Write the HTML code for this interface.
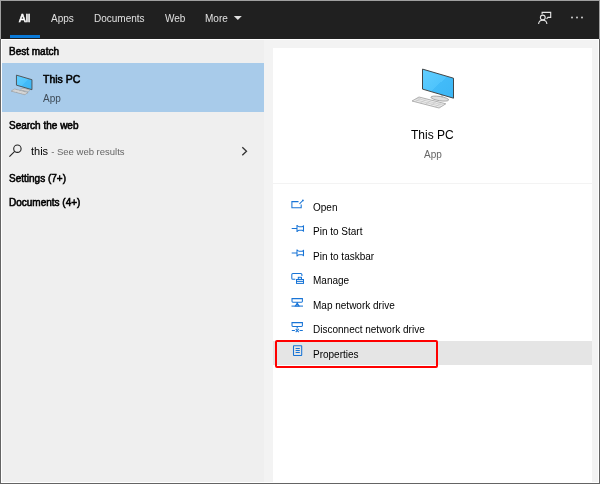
<!DOCTYPE html>
<html><head><meta charset="utf-8">
<style>
html,body{margin:0;padding:0;}
body{width:600px;height:484px;overflow:hidden;position:relative;background:#646464;font-family:"Liberation Sans",sans-serif;}
.a{position:absolute;}
.t{position:absolute;white-space:nowrap;line-height:1;will-change:transform;}
.b{font-weight:normal;-webkit-text-stroke:0.55px currentColor;}
</style></head><body>
<!-- borders -->
<div class="a" style="left:0;top:0;width:600px;height:39px;background:#a0a0a0"></div>
<div class="a" style="left:1px;top:1px;width:598px;height:38px;background:#202020"></div>
<div class="a" style="left:1px;top:39px;width:598px;height:444px;background:#ffffff"></div>
<div class="a" style="left:2px;top:40px;width:262px;height:442px;background:#efefef"></div>
<div class="a" style="left:264px;top:40px;width:334px;height:442px;background:#f3f3f3"></div>
<div class="a" style="left:273px;top:48px;width:319px;height:434px;background:#ffffff"></div>

<div class="a" style="left:273px;top:183px;width:319px;height:1px;background:#f3f3f3"></div>

<!-- header tabs -->
<div class="t b" style="left:19px;top:14px;font-size:10px;color:#fff">All</div>
<div class="t" style="left:51px;top:14px;font-size:10px;color:#e0e0e0">Apps</div>
<div class="t" style="left:94px;top:14px;font-size:10px;color:#e0e0e0">Documents</div>
<div class="t" style="left:165px;top:14px;font-size:10px;color:#e0e0e0">Web</div>
<div class="t" style="left:205px;top:14px;font-size:10px;color:#e0e0e0">More</div>
<div class="a" style="left:10px;top:35px;width:30px;height:3px;background:#0a7ad8"></div>

<!-- left panel -->
<div class="t b" style="left:9px;top:47px;font-size:10px;color:#000">Best match</div>
<div class="a" style="left:2px;top:63px;width:262px;height:49px;background:#a8cbea"></div>
<div class="t b" style="left:43px;top:74px;font-size:10.5px;color:#000">This PC</div>
<div class="t" style="left:43px;top:93.5px;font-size:10px;color:#3e4b57">App</div>
<div class="t b" style="left:9px;top:121px;font-size:10px;color:#000">Search the web</div>
<div class="t" style="left:31px;top:146px;font-size:11px;color:#000">this <span style="font-size:9.5px;color:#666">- See web results</span></div>
<div class="t b" style="left:9px;top:174px;font-size:10px;color:#000">Settings (7+)</div>
<div class="t b" style="left:9px;top:198px;font-size:10px;color:#000">Documents (4+)</div>

<!-- right card -->
<div class="t" style="left:411px;top:129px;font-size:12px;color:#000">This PC</div>
<div class="t" style="left:424px;top:150px;font-size:10px;color:#666">App</div>

<div class="a" style="left:273px;top:341px;width:319px;height:24px;background:#e5e5e5"></div>

<div class="t" style="left:313px;top:203px;font-size:10px;color:#000">Open</div>
<div class="t" style="left:313px;top:227px;font-size:10px;color:#000">Pin to Start</div>
<div class="t" style="left:313px;top:252px;font-size:10px;color:#000">Pin to taskbar</div>
<div class="t" style="left:313px;top:276px;font-size:10px;color:#000">Manage</div>
<div class="t" style="left:313px;top:301px;font-size:10px;color:#000">Map network drive</div>
<div class="t" style="left:313px;top:325px;font-size:10px;color:#000">Disconnect network drive</div>
<div class="t" style="left:313px;top:349.5px;font-size:10px;color:#000">Properties</div>

<div class="a" style="left:275px;top:340px;width:162.5px;height:28px;box-sizing:border-box;border:2.9px solid #ff0000;border-radius:2px"></div>

<svg class="a" style="left:0;top:0" width="600" height="484" viewBox="0 0 600 484">
  <defs>
    <linearGradient id="scr" x1="0" y1="0" x2="1" y2="1">
      <stop offset="0" stop-color="#62cfff"/>
      <stop offset="0.52" stop-color="#4fc4fc"/>
      <stop offset="0.52" stop-color="#42bbf8"/>
      <stop offset="1" stop-color="#3cb6f5"/>
    </linearGradient>
    <g id="pc">
      <!-- keyboard -->
      <polygon points="0,33 7,29 33.8,35.8 27.1,40" fill="#ececec" stroke="#a8a8a8" stroke-width="0.9"/>
      <path d="M2.6,31.6 L29.6,38.6 M4.8,30.3 L31.6,37.2 M8.5,30.5 L3.2,33.7 M13.5,31.8 L8.2,35 M18.5,33.1 L13.2,36.3 M23.5,34.4 L18.2,37.6 M28.5,35.6 L23.2,38.8" stroke="#c0c0c0" stroke-width="0.6" fill="none"/>
      <!-- neck -->
      <rect x="28.8" y="26" width="2.4" height="3" fill="#cfcfcf"/>
      <!-- base -->
      <ellipse cx="27.8" cy="30.6" rx="9" ry="2.1" transform="rotate(9 27.8 30.6)" fill="#e0e0e0" stroke="#9c9c9c" stroke-width="0.8"/>
      <!-- monitor -->
      <polygon points="10.5,1.1 41.5,10.2 41.5,30.2 10.5,21.1" fill="url(#scr)" stroke="#3e3e3e" stroke-width="0.95"/>
    </g>
  <g id="pcs">
      <!-- keyboard -->
      <polygon points="0,33 7,29 33.8,35.8 27.1,40" fill="#ececec" stroke="#9a9a9a" stroke-width="1.6"/>
      <path d="M2.6,31.6 L29.6,38.6 M4.8,30.3 L31.6,37.2 M8.5,30.5 L3.2,33.7 M13.5,31.8 L8.2,35 M18.5,33.1 L13.2,36.3 M23.5,34.4 L18.2,37.6 M28.5,35.6 L23.2,38.8" stroke="#c4c4c4" stroke-width="1" fill="none"/>
      <!-- neck -->
      <rect x="28.8" y="26" width="2.4" height="3" fill="#cfcfcf"/>
      <!-- base -->
      <ellipse cx="27.8" cy="30.6" rx="9" ry="2.1" transform="rotate(9 27.8 30.6)" fill="#e0e0e0" stroke="#a0a0a0" stroke-width="1.4"/>
      <!-- monitor -->
      <polygon points="10.5,1.1 41.5,10.2 41.5,30.2 10.5,21.1" fill="url(#scr)" stroke="#4a4a4a" stroke-width="1.8"/>
    </g>
  </defs>
  <!-- big pc -->
  <use href="#pc" x="412" y="68"/>
  <!-- small pc -->
  <g transform="translate(11.2,74.6) scale(0.5)"><use href="#pcs"/></g>

  <!-- tabs: More triangle -->
  <polygon points="233.8,15.9 241.8,15.9 237.8,20.1" fill="#e0e0e0"/>
  <!-- feedback icon -->
  <g fill="none" stroke="#e6e6e6" stroke-width="1.1">
    <path d="M542.1,14.2 V12.4 H550.7 V17.4 H547.9 L546.6,18.9"/>
    <circle cx="542.8" cy="17.5" r="2.4"/>
    <path d="M538.6,24 Q538.8,20.2 542.8,20.2 Q546.7,20.2 546.9,24"/>
  </g>
  <!-- more dots -->
  <g fill="#e0e0e0">
    <circle cx="572" cy="17.5" r="0.9"/><circle cx="577" cy="17.5" r="0.9"/><circle cx="582" cy="17.5" r="0.9"/>
  </g>

  <!-- search icon -->
  <g fill="none" stroke="#222" stroke-width="1.1">
    <circle cx="17.4" cy="148.7" r="3.7"/>
    <path d="M14.7,151.4 L9.4,156.7"/>
  </g>
  <!-- chevron -->
  <path d="M242.3,147.3 L246.5,151.3 L242.3,155.3" fill="none" stroke="#333" stroke-width="1.3"/>

  <!-- action icons -->
  <g fill="none" stroke="#1874d6" stroke-width="1.05">
    <!-- open -->
    <path d="M298.5,201.6 H291.9 V207.7 H301.2 V204.5"/>
    <path d="M299.5,203.8 L302.8,200.5"/>
    <!-- pin to start -->
    <path d="M291.7,228.5 H296.6 M297,225 V232 M297.3,225.7 Q298.4,226.7 299,226.7 H302.3 L303.5,226 V231 L302.3,230.3 H299 Q298.4,230.3 297.3,231.3"/>
    <!-- pin to taskbar -->
    <path d="M291.7,253 H296.6 M297,249.5 V256.5 M297.3,250.2 Q298.4,251.2 299,251.2 H302.3 L303.5,250.5 V255.5 L302.3,254.8 H299 Q298.4,254.8 297.3,255.8"/>
    <!-- manage -->
    <path d="M295.3,279.3 H292.9 Q291.8,279.3 291.8,278.2 V274.5 Q291.8,273.5 292.9,273.5 H300.8 Q301.9,273.5 301.9,274.5 V276"/>
    </g>
    <g fill="#1874d6">
    <rect x="297.8" y="276.8" width="4.2" height="2.4"/>
    <rect x="296" y="279" width="8" height="4.9"/>
    </g>
    <g fill="#ffffff">
    <rect x="298.8" y="277.8" width="2.2" height="1"/>
    <rect x="297" y="280.2" width="6" height="0.9"/>
    <rect x="297" y="282.1" width="6" height="0.9"/>
    </g>
    <g fill="none" stroke="#1874d6" stroke-width="1.05">
    <!-- map network drive -->
    <path d="M292,298.6 H302.4 V301.3 Q302.4,302.2 301.5,302.2 H292.9 Q292,302.2 292,301.3 Z"/>
    <path d="M297.2,302.2 V303.5"/>
    <path d="M295.3,306 L297.2,303.2 L299.1,306 Z"/>
    <path d="M291.5,306.1 H303"/>
    <!-- disconnect -->
    <path d="M292,322.6 H302.4 V325.5 Q302.4,326.4 301.5,326.4 H292.9 Q292,326.4 292,325.5 Z"/>
    <path d="M297.2,326.4 V328.6"/>
    <path d="M291.8,330.5 H294.9 M299.6,330.5 H302.8"/>
    <path d="M295.7,328.9 L298.8,332.1 M298.8,328.9 L295.7,332.1"/>
    <!-- properties -->
    <rect x="293.5" y="345.7" width="8.2" height="9.7" rx="0.4"/>
    <path d="M295.6,348.4 H299.8 M295.6,350.4 H299.8 M295.6,352.4 H299.8"/>
  </g>
  <circle cx="302.9" cy="200.4" r="0.9" fill="#1874d6"/>
</svg>
</body></html>
